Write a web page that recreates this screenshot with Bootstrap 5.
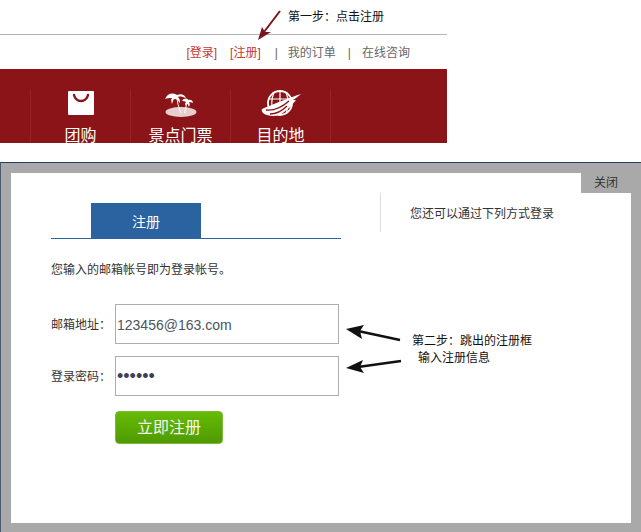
<!DOCTYPE html>
<html lang="zh"><head><meta charset="utf-8">
<link href="https://cdn.jsdelivr.net/npm/bootstrap@5.3.0/dist/css/bootstrap.min.css" rel="stylesheet">
<style>
html,body{margin:0;width:641px;height:532px;overflow:hidden;background:#fff}
body{font-family:"Liberation Sans","Noto Sans CJK SC",sans-serif;font-size:12px;color:#333;position:relative}
.topzone{width:447px;height:162px}
.ruleband{height:35px;border-bottom:1px solid #b4b4b4}
.linkrow{height:34px;padding:10px 37px 0 0;gap:12px;line-height:17px;color:#666}
.linkrow span{white-space:nowrap}
.redlink{color:#c8382f}
.firstred{margin-right:1px}
.sepbar{color:#666;margin-right:-1px}
.sepwide{margin:0 -2px 0 2px}
.redband{height:74px;background:#8a1417;padding:20px 0 0 30px;overflow:hidden}
.navcell{width:100px;height:54px;border-left:1px solid #9c2226;text-align:center;color:#fff;font-size:16px;line-height:22px;flex:none}
.navcell:last-child{width:1px}
.navcell svg{display:block;margin:0 auto;height:36px}
.shade{height:370px;background:#a9a9a9;border-top:1px solid #1d3f66;border-left:1px solid #4a5a6a;padding:10px 10px 9px 10px}
.sheet{height:350px;background:#fff;position:relative;padding:20px 0 0 40px}
.closer{position:absolute;top:0;right:0;width:50px;height:20px;background:#a9a9a9;text-align:center;line-height:20px;color:#333}
.leftpane{width:290px;padding-top:10px}
.tabline{height:36px;border-bottom:1px solid #2a63a0;padding-left:40px}
.tabbox{width:110px;height:36px;background:#2a63a0;color:#fff;font-size:14px;text-align:center;line-height:38px}
.rightpane{margin-left:39px;height:39px;border-left:1px solid #ddd;padding:12px 0 0 29px;line-height:18px}
.hintline{margin-top:23px;margin-bottom:25px;line-height:17px;color:#333}
.formrow{height:40px;margin-bottom:12px}
.formrow label{width:64px;line-height:17px;flex:none;padding-top:2px}
.fieldbox{width:224px;height:40px;border:1px solid #adadad;padding:0 1px;font-size:14px;line-height:40px;color:#4a5560;background:#fff}
.dotset{font-size:18px;color:#3d3f55;line-height:38px}
.greenbtn{width:108px;height:33px;margin:15px 0 0 64px;padding:0;border:1px solid #7cb83a;border-radius:4px;background:linear-gradient(#66bb05,#4f9a02);color:#f2f7e8;font-size:16px;line-height:30px;display:block;font-family:inherit}
.notebox{position:absolute;white-space:nowrap;color:#111;line-height:17px}
.arrows{position:absolute;left:0;top:0;pointer-events:none}
.stepone{left:288px;top:9px}
.steptwo{left:412px;top:333px}
.steptwo div+div{padding-left:6px}
</style></head><body>
<div class="topzone">
  <div class="ruleband"></div>
  <div class="linkrow d-flex justify-content-end">
    <span class="redlink firstred">[登录]</span><span class="redlink">[注册]</span><span class="sepbar sepwide">|</span><span>我的订单</span><span class="sepbar">|</span><span>在线咨询</span>
  </div>
  <div class="redband d-flex">
    <div class="navcell"><svg width="28" height="36" viewBox="0 0 28 36"><rect x="1" y="2" width="26" height="24" rx="1" fill="#fff"/><path d="M7 6c2 8 12 8 14 0" fill="none" stroke="#8a1417" stroke-width="2.400" stroke-linecap="round"/></svg>团购</div>
    <div class="navcell"><svg width="34" height="36" viewBox="0 0 34 36"><ellipse cx="17" cy="23" rx="15.500" ry="5" fill="#e6cfd0"/><path d="M13 7c0 6 1.500 11 4 17M23 10c-.5 5-1 9-2.500 14" stroke="#fff" stroke-width="1" fill="none"/><path d="M1 10c2-5 7-7 12-4 4-2 8 0 9 3-3-1-6-2-8-1 2 2 2 4 2 6-2-2-3-4-5-4-2 0-2 2-3 5-1-3-1-5 0-6-3 0-5 0-7 1z" fill="#fff"/><path d="M18 12c2-3 5-3 6-1 2-1 5 0 5 3-2-1-3-1-4-1 1 1 1 3 0 5-1-2-1-3-2-3-1 0-2 1-2 2 0-2 0-3 1-4-1-1-3-1-4-1z" fill="#fff"/></svg>景点门票</div>
    <div class="navcell"><svg width="42" height="36" viewBox="0 0 42 36"><circle cx="20" cy="14" r="12" fill="none" stroke="#fff" stroke-width="1.800"/><path d="M20 2v24M8.500 10h23M8.500 18h23M14 3.500c-3 7-3 14 0 21M26 3.500c3 7 3 14 0 21" stroke="#fff" stroke-width="1.200" fill="none"/><path d="M41 5C31 8 14 15 2 20c-1 2 1 5 5 6 6 2 12 1 16-2 6-5 10-9 13-13l-3 0 3-2z" fill="#fff"/><path d="M6 21c8 1 15-2 23-9M10 25c6 0 12-3 17-8" stroke="#8a1417" stroke-width="1.300" fill="none"/></svg>目的地</div>
    <div class="navcell"></div>
  </div>
</div>
<div class="shade">
  <div class="sheet">
    <div class="closer">关闭</div>
    <div class="d-flex">
      <div class="leftpane">
        <div class="tabline"><div class="tabbox">注册</div></div>
        <div class="hintline">您输入的邮箱帐号即为登录帐号。</div>
      </div>
      <div class="rightpane">您还可以通过下列方式登录</div>
    </div>
    <div class="formarea">
      <div class="formrow d-flex align-items-center"><label>邮箱地址：</label><div class="fieldbox">123456@163.com</div></div>
      <div class="formrow d-flex align-items-center"><label>登录密码：</label><div class="fieldbox dotset">••••••</div></div>
      <button type="button" class="greenbtn">立即注册</button>
    </div>
  </div>
</div>
<div class="notebox stepone">第一步：点击注册</div>
<div class="notebox steptwo"><div>第二步：跳出的注册框</div><div>输入注册信息</div></div>
<svg class="arrows" width="641" height="532" viewBox="0 0 641 532">
  <path d="M280 11 L264 32" stroke="#7a1519" stroke-width="2" fill="none"/>
  <path d="M258 40 L262 27 L265 32 L271 32z" fill="#7a1519"/>
  <path d="M400 340 L358 331" stroke="#111" stroke-width="2.400" fill="none"/>
  <path d="M346 329 L364 325 L360 331 L362 339z" fill="#111"/>
  <path d="M401 361 L358 367" stroke="#111" stroke-width="2.400" fill="none"/>
  <path d="M346 368 L363 360 L360 367 L364 373z" fill="#111"/>
</svg>
</body></html>
